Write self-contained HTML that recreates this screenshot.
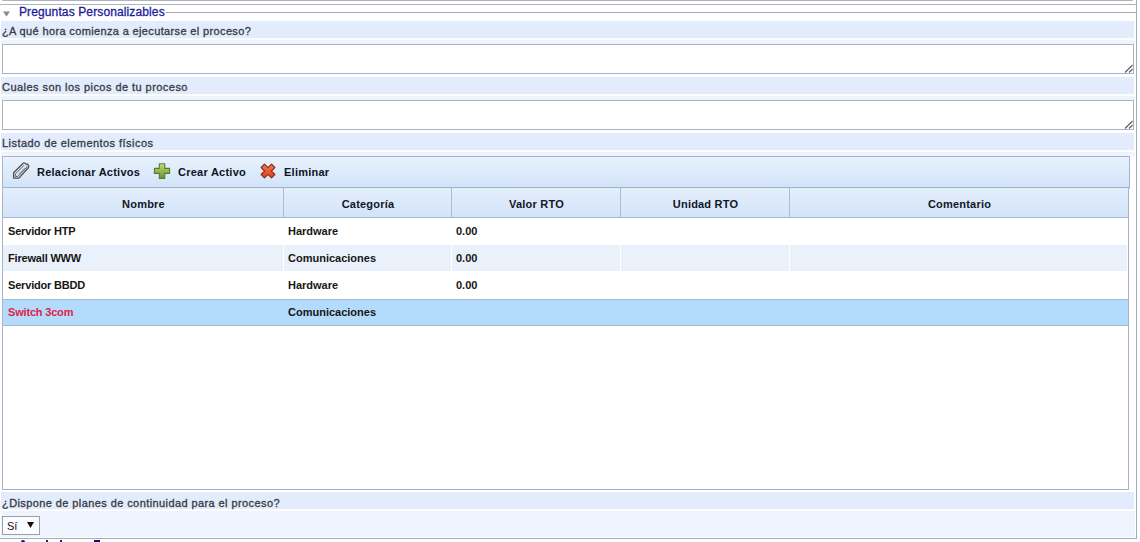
<!DOCTYPE html>
<html><head><meta charset="utf-8">
<style>
*{margin:0;padding:0;box-sizing:border-box}
html,body{width:1140px;height:542px;overflow:hidden;background:#fff;font-family:"Liberation Sans",sans-serif;position:relative}
.a{position:absolute}
.band{position:absolute;left:1px;width:1133px;height:17px;background:linear-gradient(#e2ecfc 0,#e2ecfc 15px,#e4ebf6 17px)}
.gap{position:absolute;left:1px;width:1134px;height:6px;background:linear-gradient(#fbfdff 0,#fbfdff 2px,#eff3fe 2px)}
.lbl{position:absolute;left:2px;font-size:11px;letter-spacing:0.45px;-webkit-text-stroke:0.3px #363a42;color:#363a42;white-space:nowrap;line-height:13px}
.ta{position:absolute;left:2px;width:1132px;height:30px;border:1px solid #a9b2c2;background:#fff}
.grip{position:absolute;right:0px;bottom:0px;width:9px;height:9px}
.tb{position:absolute;font-size:11px;font-weight:bold;letter-spacing:0.25px;color:#0e1326;white-space:nowrap;line-height:13px}
.th{position:absolute;top:188px;height:30px;border-right:1px solid #a8bdd8;background:linear-gradient(#e5effc,#d2e3f9)}
.thx{position:absolute;top:198px;font-size:11px;font-weight:bold;letter-spacing:0.2px;color:#101828;white-space:nowrap;line-height:13px;text-align:center}
.cell{position:absolute;font-size:11px;font-weight:bold;letter-spacing:-0.18px;color:#161616;white-space:nowrap;line-height:13px}
</style></head><body>
<!-- top remnants -->
<div class="a" style="left:2px;top:0;width:1131px;height:1px;background:#abb3bf;border-radius:0 0 1px 1px"></div>
<div class="a" style="left:0;top:4px;width:1137px;height:1px;background:#b0b4b9"></div>
<div class="a" style="left:1136px;top:0;width:1px;height:539px;background:#a3abb8"></div>

<!-- legend -->
<svg class="a" style="left:3px;top:11px" width="8" height="6"><path d="M0 0.5 L7 0.5 L3.5 5.5 Z" fill="#8a8a8a"/></svg>
<div class="a" style="left:19px;top:5px;font-size:12px;letter-spacing:0.12px;color:#1c1c9a;-webkit-text-stroke:0.3px #1c1c9a;white-space:nowrap;line-height:14px">Preguntas Personalizables</div>
<div class="a" style="left:166px;top:12px;width:970px;height:1px;background:#a6a9ae"></div>

<!-- Q1 -->
<div class="band" style="top:21px"></div>
<div class="gap" style="top:38px"></div>
<div class="lbl" style="top:25px;letter-spacing:0.36px">¿A qué hora comienza a ejecutarse el proceso?</div>
<div class="ta" style="top:44px"><svg class="grip" width="9" height="9"><path d="M1 8.5 L8.5 1 M5 8.5 L8.5 5" stroke="#5a5a5a" stroke-width="1.1"/></svg></div>

<!-- Q2 -->
<div class="band" style="top:77px"></div>
<div class="gap" style="top:94px"></div>
<div class="lbl" style="top:81px">Cuales son los picos de tu proceso</div>
<div class="ta" style="top:100px"><svg class="grip" width="9" height="9"><path d="M1 8.5 L8.5 1 M5 8.5 L8.5 5" stroke="#5a5a5a" stroke-width="1.1"/></svg></div>

<!-- Q3 -->
<div class="band" style="top:133px"></div>
<div class="gap" style="top:150px"></div>
<div class="lbl" style="top:137px">Listado de elementos físicos</div>

<!-- grid -->
<div class="a" style="left:2px;top:187px;width:1127px;height:303px;border:1px solid #a4b4cc;border-top:0;background:#fff"></div>
<div class="a" style="left:2px;top:156px;width:1128px;height:32px;background:linear-gradient(#e9f2fd,#d2e3f9);border:1px solid #a4b4cc;border-bottom:1px solid #9fb2ca;box-shadow:0 1px 0 #b9c9dc"></div>

<!-- toolbar icons -->
<svg class="a" style="left:8px;top:158px" width="26" height="26" viewBox="0 0 26 26">
<path d="M5.6 14.8 L15.2 5.2 Q16.1 4.5 16.9 5.3 L17.5 5.9 Q19 5.6 20.2 6.8 Q21.3 8.2 20.5 9.5 L10.9 20.1 H5.6 Z" fill="none" stroke="#505050" stroke-width="1.3" stroke-linejoin="round"/>
<path d="M7.3 16 V18.4 H9.9 L18.6 9.4 Q19.2 8.4 18.4 7.6" fill="none" stroke="#606060" stroke-width="1"/>
<path d="M7.3 16 L16 7.3" fill="none" stroke="#606060" stroke-width="1"/>
<path d="M10.6 16.2 L17 9.6" fill="none" stroke="#8a8a8a" stroke-width="0.9"/>
</svg>
<div class="tb" style="left:37px;top:166px">Relacionar Activos</div>
<svg class="a" style="left:153px;top:163px" width="18" height="17" viewBox="0 0 18 17">
<defs><linearGradient id="g1" x1="0" y1="0" x2="0" y2="1"><stop offset="0" stop-color="#c0da86"/><stop offset="0.45" stop-color="#98bb55"/><stop offset="1" stop-color="#6a9432"/></linearGradient></defs>
<path d="M6.3 0.8 H11.8 V5.4 H16.6 V10.4 H11.8 V15.4 H6.3 V10.4 H1.4 V5.4 H6.3 Z" fill="url(#g1)" stroke="#587b2e" stroke-width="1.1" stroke-linejoin="round"/>
</svg>
<div class="tb" style="left:178px;top:166px">Crear Activo</div>
<svg class="a" style="left:260px;top:163px" width="16" height="16" viewBox="0 0 16 16">
<defs><linearGradient id="g2" x1="0" y1="0" x2="0" y2="1"><stop offset="0" stop-color="#f4764c"/><stop offset="1" stop-color="#dc4420"/></linearGradient></defs>
<path d="M1.1 4.5 L4.5 1.1 L8 4.6 L11.5 1.1 L14.9 4.5 L11.4 8 L14.9 11.5 L11.5 14.9 L8 11.4 L4.5 14.9 L1.1 11.5 L4.6 8 Z" fill="url(#g2)" stroke="#8e2a1e" stroke-width="1.1" stroke-linejoin="round"/>
</svg>
<div class="tb" style="left:284px;top:166px">Eliminar</div>

<!-- header -->
<div class="th" style="left:3px;width:281px"></div>
<div class="th" style="left:284px;width:168px"></div>
<div class="th" style="left:452px;width:169px"></div>
<div class="th" style="left:621px;width:169px"></div>
<div class="th" style="left:790px;width:338px;border-right:0"></div>
<div class="a" style="left:3px;top:217px;width:1125px;height:1px;background:#a6bad4"></div>
<div class="thx" style="left:3px;width:281px">Nombre</div>
<div class="thx" style="left:284px;width:168px">Categoría</div>
<div class="thx" style="left:452px;width:169px">Valor RTO</div>
<div class="thx" style="left:621px;width:169px">Unidad RTO</div>
<div class="thx" style="left:790px;width:339px">Comentario</div>

<!-- rows -->
<div class="a" style="left:3px;top:245px;width:1124px;height:26px;background:#eaf1fb"></div>
<div class="a" style="left:283px;top:245px;width:1px;height:26px;background:#fff"></div>
<div class="a" style="left:451px;top:245px;width:1px;height:26px;background:#fff"></div>
<div class="a" style="left:620px;top:245px;width:1px;height:26px;background:#fff"></div>
<div class="a" style="left:789px;top:245px;width:1px;height:26px;background:#fff"></div>
<div class="a" style="left:3px;top:299px;width:1125px;height:27px;background:#b4dbfc;border-top:1px solid #a0bdd8;border-bottom:1px solid #a0bdd8"></div>

<div class="cell" style="left:8px;top:225px">Servidor HTP</div>
<div class="cell" style="letter-spacing:0;left:288px;top:225px">Hardware</div>
<div class="cell" style="letter-spacing:0;left:456px;top:225px">0.00</div>
<div class="cell" style="left:8px;top:252px">Firewall WWW</div>
<div class="cell" style="letter-spacing:0;left:288px;top:252px">Comunicaciones</div>
<div class="cell" style="letter-spacing:0;left:456px;top:252px">0.00</div>
<div class="cell" style="left:8px;top:279px">Servidor BBDD</div>
<div class="cell" style="letter-spacing:0;left:288px;top:279px">Hardware</div>
<div class="cell" style="letter-spacing:0;left:456px;top:279px">0.00</div>
<div class="cell" style="left:8px;top:306px;color:#dc1f48">Switch 3com</div>
<div class="cell" style="letter-spacing:0;left:288px;top:306px">Comunicaciones</div>

<!-- Q4 -->
<div class="band" style="top:492px"></div>
<div class="a" style="left:1px;top:509px;width:1134px;height:28px;background:linear-gradient(#fbfdff 0,#fbfdff 2px,#eff3fe 2px)"></div>
<div class="lbl" style="top:497px;letter-spacing:0.41px">¿Dispone de planes de continuidad para el proceso?</div>
<div class="a" style="left:2px;top:516px;width:38px;height:19px;border:1px solid #9aa0aa;background:#fbfcff"></div>
<div class="a" style="left:7px;top:520px;font-size:11px;color:#151515;line-height:13px">Sí</div>
<svg class="a" style="left:27px;top:522px" width="7" height="6"><path d="M0 0 H7 L3.5 6 Z" fill="#111"/></svg>
<div class="a" style="left:0;top:538px;width:1137px;height:1px;background:#a6a9ae"></div>
<div class="a" style="left:21px;top:540px;width:4px;height:2px;background:#14147a;border-radius:2px 2px 0 0"></div>
<div class="a" style="left:46px;top:540px;width:2px;height:2px;background:#22227e"></div>
<div class="a" style="left:60px;top:540px;width:2px;height:2px;background:#22227e"></div>
<div class="a" style="left:94px;top:540px;width:6px;height:2px;background:#10106e"></div>
</body></html>
